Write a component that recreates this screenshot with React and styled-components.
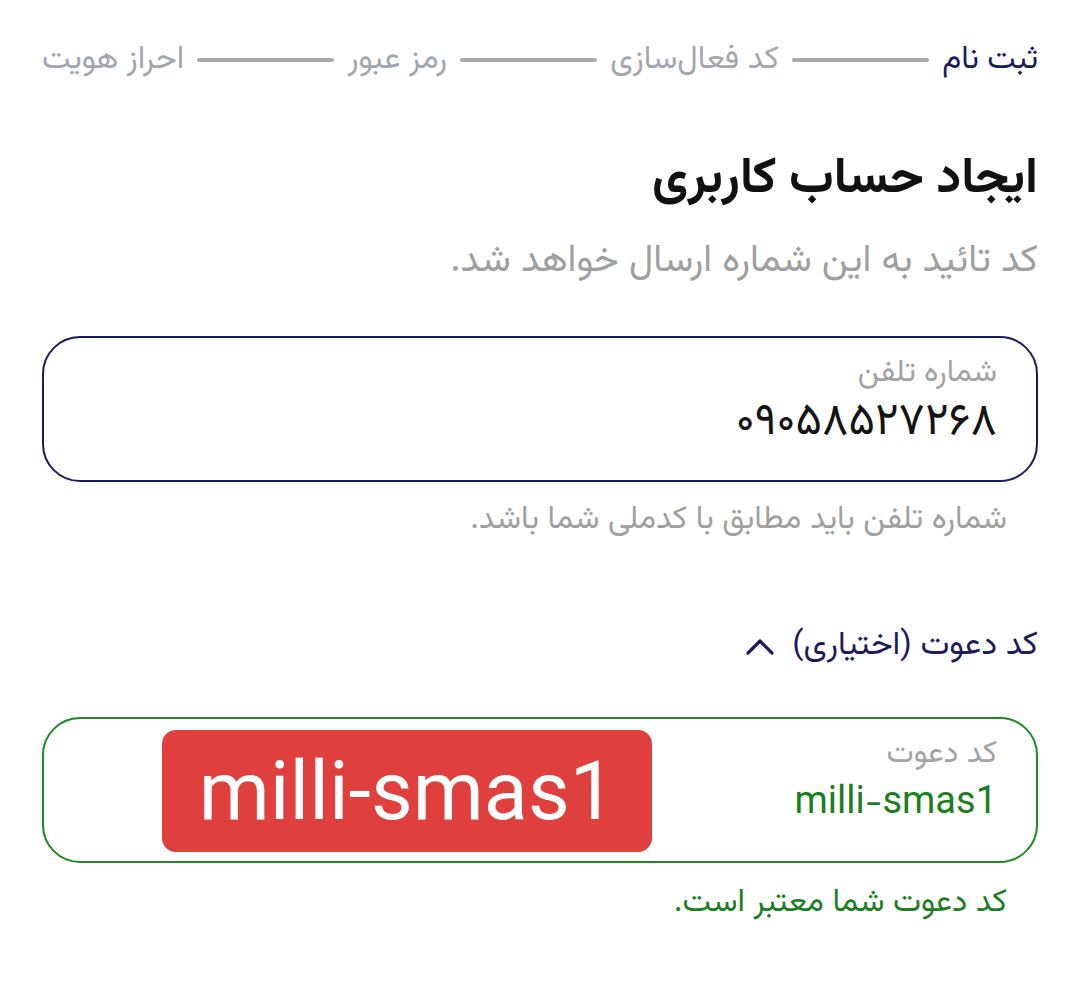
import React from 'react';
import styled, { createGlobalStyle } from 'styled-components';

const Global = createGlobalStyle`
  html, body {
    margin: 0;
    background: #fff;
  }
  body {
    font-family: "Vazirmatn", "Noto Sans Arabic", "DejaVu Sans", sans-serif;
  }
`

const Page = styled.div`
  direction: rtl;
  width: 1080px;
  box-sizing: border-box;
  padding: 38px 42px 0 42px;
  display: flex;
  flex-direction: column;
`

const Stepper = styled.div`
  display: flex;
  align-items: center;
  gap: 13px;
  height: 44px;
`

const StepLabel = styled.span`
  font-size: 32px;
  line-height: 44px;
  white-space: nowrap;
  color: ${p => (p.active ? '#1c1c5c' : '#a3a6ad')};
`

const StepLine = styled.div`
  flex: 1;
  height: 4px;
  background: #a9abb1;
  border-radius: 2px;
`

const Title = styled.h1`
  margin: 68px 0 0 0;
  font-size: 50px;
  font-weight: bold;
  color: #111;
  line-height: 60px;
`

const Subtitle = styled.p`
  margin: 27px 0 0 0;
  font-size: 38px;
  color: #a0a0a0;
  line-height: 50px;
`

const Field = styled.div`
  position: relative;
  margin-top: 49px;
  height: 146px;
  box-sizing: border-box;
  border: 2px solid ${p => p.color};
  border-radius: 38px;
  padding: 14px 39px 0 39px;
  display: flex;
  flex-direction: column;
  gap: 2px;
`

const FieldLabel = styled.span`
  font-size: 31px;
  color: #a3a3a3;
  line-height: 44px;
`

const FieldValue = styled.span`
  font-size: ${p => p.size}px;
  color: ${p => p.color};
  line-height: 50px;
  direction: ltr;
  text-align: right;
`

const Hint = styled.p`
  margin: ${p => p.top}px 31px 0 0;
  font-size: 32px;
  line-height: 44px;
  color: ${p => p.color};
`

const Toggle = styled.div`
  margin-top: 82px;
  display: flex;
  align-items: center;
  gap: 18px;
  font-size: 33px;
  line-height: 44px;
  color: #1c1c5c;
`

const Banner = styled.div`
  position: absolute;
  left: 118px;
  top: 11px;
  width: 490px;
  height: 122px;
  background: #e0403d;
  border-radius: 14px;
  display: flex;
  align-items: center;
  justify-content: center;
  direction: ltr;
  color: #fff;
  font-family: Roboto, "Liberation Sans", sans-serif;
  font-size: 81px;
`

const Chevron = () => (
  <svg width="28" height="18" viewBox="0 0 28 18" fill="none">
    <path d="M2 16 L14 4 L26 16" stroke="#1c1c5c" strokeWidth="3.2" strokeLinecap="round" strokeLinejoin="round" />
  </svg>
)

const steps = ['ثبت نام', 'کد فعال‌سازی', 'رمز عبور', 'احراز هویت']

export default function App() {
  return (
    <Page>
      <Global />
      <Stepper>
        {steps.map((s, i) => (
          <React.Fragment key={s}>
            {i > 0 && <StepLine />}
            <StepLabel active={i === 0}>{s}</StepLabel>
          </React.Fragment>
        ))}
      </Stepper>

      <Title>ایجاد حساب کاربری</Title>
      <Subtitle>کد تائید به این شماره ارسال خواهد شد.</Subtitle>

      <Field color="#1c1c5c">
        <FieldLabel>شماره تلفن</FieldLabel>
        <FieldValue size={45} color="#141414">۰۹۰۵۸۵۲۷۲۶۸</FieldValue>
      </Field>
      <Hint top={16} color="#a0a0a0">شماره تلفن باید مطابق با کدملی شما باشد.</Hint>

      <Toggle>
        <span>کد دعوت (اختیاری)</span>
        <Chevron />
      </Toggle>

      <Field color="#1d8a22">
        <FieldLabel>کد دعوت</FieldLabel>
        <FieldValue size={38} color="#1b7f1f">milli-smas1</FieldValue>
        <Banner>milli-smas1</Banner>
      </Field>
      <Hint top={18} color="#1b7f1f">کد دعوت شما معتبر است.</Hint>
    </Page>
  )
}
